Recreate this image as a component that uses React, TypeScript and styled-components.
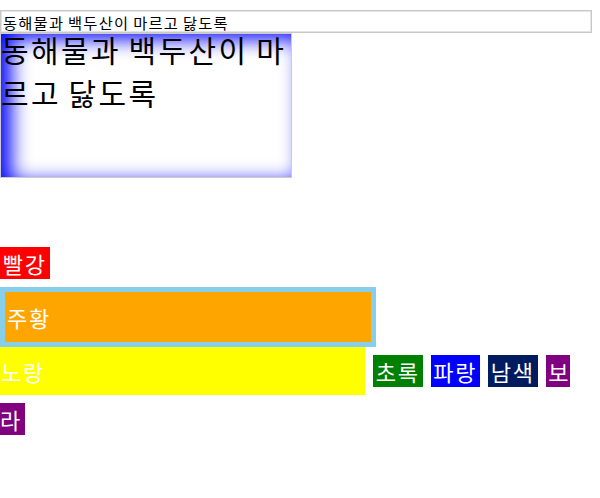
import React from 'react';
import styled, { createGlobalStyle } from 'styled-components';

const GlobalStyle = createGlobalStyle`
  body {
    margin: 0;
    background: #fff;
    font-family: "Noto Sans CJK KR", "Noto Sans", sans-serif;
  }
  #root {
    width: 592px;
  }
`;

const LYRIC = '동해물과 백두산이 마르고 닳도록';

const Page = styled.div`
  display: flex;
  flex-direction: column;
  align-items: flex-start;
`;

// hangul in the reference is full-width: widen the proportional glyphs a bit
const TextField = styled.input`
  display: block;
  box-sizing: border-box;
  width: 592px;
  height: 23px;
  margin: 10px 0 0;
  padding: 0 2px;
  border: 1px solid #c8c8c8;
  box-shadow: inset 0 0 0 1px #e4e4e4;
  font-family: "Noto Sans CJK KR", sans-serif;
  font-size: 15.3px;
  letter-spacing: 0.08em;
  word-spacing: -0.05em;
  color: #000;
  background: #fff;
  outline: none;
`;

const GlowBox = styled.div`
  box-sizing: border-box;
  width: 292px;
  height: 145px;
  border: 1px solid #ccc;
  box-shadow: inset 10px 5px 20px #00f;
  font-size: 30px;
  line-height: 42.5px;
  letter-spacing: 0.08em;
  word-spacing: -0.05em;
  color: #000;
`;

const GlowText = styled.div`
  margin-top: -6px;
`;

const Swatches = styled.div`
  margin-top: 61px;
  width: 100%;
  font-size: 22px;
  line-height: 48px;
  letter-spacing: 0.08em;
  color: #fff;
`;

const Line = styled.div``;

const Chip = styled.span<{ $bg: string }>`
  padding: 0 2.75px;
  background: ${(p) => p.$bg};
  & + & {
    margin-left: 8px;
  }
`;

const Framed = styled.div`
  width: 364px;
  height: 50px;
  padding-left: 2px;
  border: 5px solid #87ceeb;
  background: #ffa500;
  line-height: 50px;
`;

const Bar = styled.span`
  display: inline-block;
  box-sizing: border-box;
  width: 365px;
  padding-left: 1px;
  background: #ff0;
  margin-right: 8px;
`;

export default function App() {
  return (
    <>
      <GlobalStyle />
      <Page>
        <TextField defaultValue={LYRIC} />
        <GlowBox>
          <GlowText>{LYRIC}</GlowText>
        </GlowBox>
        <Swatches>
          <Line>
            <Chip $bg="#f00">빨강</Chip>
          </Line>
          <Framed>주황</Framed>
          <Line>
            <Bar>노랑</Bar>
            <Chip $bg="#008000">초록</Chip>
            <Chip $bg="#00f">파랑</Chip>
            <Chip $bg="#001b5e">남색</Chip>
            <Chip $bg="#800080">보라</Chip>
          </Line>
        </Swatches>
      </Page>
    </>
  );
}
